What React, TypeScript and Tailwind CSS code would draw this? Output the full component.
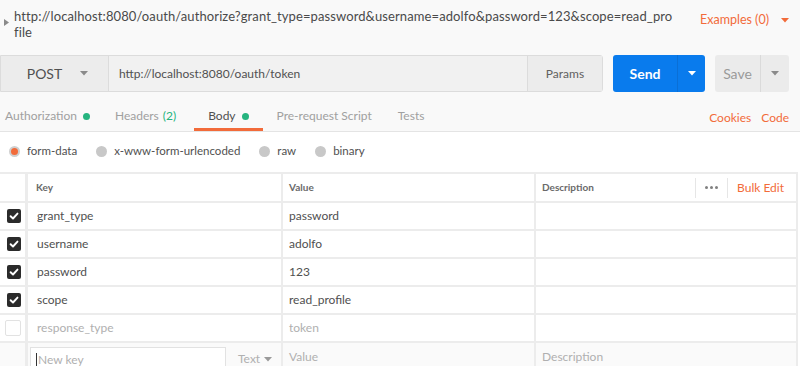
import React from "react";

const ORANGE = "text-[#f26b3a]";

function Check() {
  return (
    <div className="w-[14px] h-[14px] rounded-[2px] bg-[#2b2b2b] flex items-center justify-center">
      <svg width="10" height="10" viewBox="0 0 10 10">
        <path d="M1.6 5.2 L4 7.5 L8.5 2.6" stroke="white" strokeWidth="1.9" fill="none" strokeLinecap="round" strokeLinejoin="round" />
      </svg>
    </div>
  );
}

function Caret({ color = "#777", size = 8 }: { color?: string; size?: number }) {
  return (
    <svg width={size} height={size / 2 + 1} viewBox="0 0 8 5">
      <path d="M0 0 L8 0 L4 4.5 Z" fill={color} />
    </svg>
  );
}

function Radio({ on, label }: { on?: boolean; label: string }) {
  return (
    <div className="flex items-center gap-[7px]">
      {on ? (
        <div className="w-[11px] h-[11px] rounded-full bg-[#f26b3a] border-[2px] border-[#cfcfcf]" />
      ) : (
        <div className="w-[11px] h-[11px] rounded-full bg-[#c8c8c8]" />
      )}
      <span className="text-[11.5px] text-[#505050]">{label}</span>
    </div>
  );
}

const rows = [
  { k: "grant_type", v: "password", on: true },
  { k: "username", v: "adolfo", on: true },
  { k: "password", v: "123", on: true },
  { k: "scope", v: "read_profile", on: true },
  { k: "response_type", v: "token", on: false },
];

export default function App() {
  return (
    <div
      className="w-[800px] h-[366px] overflow-hidden bg-white"
      style={{ fontFamily: "Lato, 'Open Sans', sans-serif" }}
    >
      <div className="bg-[#f9f9f9] border-b border-[#e4e4e4]">
        {/* URL title */}
        <div className="flex items-start h-[55px] pt-[8px]">
          <div className="w-[14px] pt-[11px] pl-[4px]">
            <svg width="5" height="7" viewBox="0 0 5 7">
              <path d="M0 0 L5 3.5 L0 7 Z" fill="#8a8a8a" />
            </svg>
          </div>
          <div className="w-[680px] text-[13px] leading-[16px] tracking-[0.1px] text-[#4a4a4a]">
            <div>http://localhost:8080/oauth/authorize?grant_type=password&amp;username=adolfo&amp;password=123&amp;scope=read_pro</div>
            <div>file</div>
          </div>
          <div className="flex items-center gap-[12px] ml-[6px] pt-[3px]">
            <span className={`text-[12.5px] ${ORANGE}`}>Examples (0)</span>
            <Caret color="#f26b3a" />
          </div>
        </div>

        {/* Request bar */}
        <div className="flex h-[37px]">
          <div className="flex w-[603px] border border-[#dcdcdc] rounded-r-[3px] bg-[#efefef]">
            <div className="w-[108px] flex items-center justify-center gap-[18px] bg-[#ececec] border-r border-[#dcdcdc]">
              <span className="text-[14px] text-[#505050] ml-[6px]">POST</span>
              <Caret color="#8a8a8a" />
            </div>
            <div className="flex-1 flex items-center pl-[10px] text-[12px] text-[#505050] bg-[#f1f1f1]">
              http://localhost:8080/oauth/token
            </div>
            <div className="w-[75px] flex items-center justify-center text-[12px] text-[#606060] bg-[#ececec] border-l border-[#dcdcdc]">
              Params
            </div>
          </div>
          <div className="ml-[10px] w-[92px] flex rounded-[3px] bg-[#097bed] text-white">
            <div className="w-[64px] flex items-center justify-center text-[14px] font-bold">Send</div>
            <div className="flex-1 flex items-center justify-center border-l border-[#0a6fd6]">
              <Caret color="#ffffff" />
            </div>
          </div>
          <div className="ml-[10px] w-[74px] flex rounded-[3px] bg-[#ebebeb]">
            <div className="w-[45px] flex items-center justify-center text-[14px] text-[#9a9a9a]">Save</div>
            <div className="flex-1 flex items-center justify-center border-l border-[#dadada]">
              <Caret color="#8a8a8a" />
            </div>
          </div>
        </div>

        {/* Tabs */}
        <div className="flex items-end h-[39px]">
          <div className="flex text-[12px] ml-[-9px]">
            <div className="px-[14px] h-[30px] flex items-center gap-[6px] text-[#a0a0a0]">
              Authorization <span className="w-[7px] h-[7px] rounded-full bg-[#26b47f]" />
            </div>
            <div className="pl-[11px] pr-[18px] h-[30px] flex items-center gap-[4px] text-[#a0a0a0]">
              Headers <span className="text-[#26b47f]">(2)</span>
            </div>
            <div className="px-[14px] h-[30px] flex items-center gap-[6px] text-[#505050] border-b-[3px] border-[#f26b3a] pt-[3px]">
              Body <span className="w-[7px] h-[7px] rounded-full bg-[#26b47f]" />
            </div>
            <div className="px-[14px] h-[30px] flex items-center text-[#a0a0a0]">Pre-request Script</div>
            <div className="px-[12px] h-[30px] flex items-center text-[#a0a0a0]">Tests</div>
          </div>
          <div className="ml-auto flex gap-[10px] h-[30px] items-center pr-[11px] pt-[4px] text-[12px]">
            <span className={ORANGE}>Cookies</span>
            <span className={ORANGE}>Code</span>
          </div>
        </div>
      </div>

      {/* Body type radios */}
      <div className="flex items-center h-[38px] pl-[9px] gap-[19px]">
        <Radio on label="form-data" />
        <Radio label="x-www-form-urlencoded" />
        <Radio label="raw" />
        <Radio label="binary" />
      </div>

      {/* Table */}
      <div className="w-[798px] border-t-2 border-[#ececec] text-[12px] mt-[2px]">
        <div className="grid grid-cols-[28px_255px_253px_1fr] h-[29px] border-b-2 border-[#ececec]">
          <div className="border-r-[3px] border-[#ececec]" />
          <div className="flex items-center pl-[8px] text-[10px] font-bold text-[#6a6a6a] border-r-2 border-[#ececec]">Key</div>
          <div className="flex items-center pl-[6px] text-[10px] font-bold text-[#6a6a6a] border-r-2 border-[#ececec]">Value</div>
          <div className="flex items-center pl-[6px] border-r-2 border-[#ececec]">
            <span className="text-[10px] font-bold text-[#6a6a6a]">Description</span>
            <div className="ml-auto flex items-center h-[20px]">
              <div className="border-l border-[#e6e6e6] h-[20px] px-[9px] flex items-center gap-[2px]">
                <span className="w-[3px] h-[3px] rounded-full bg-[#808080]" />
                <span className="w-[3px] h-[3px] rounded-full bg-[#808080]" />
                <span className="w-[3px] h-[3px] rounded-full bg-[#808080]" />
              </div>
              <div className="border-l border-[#e6e6e6] h-[20px] pl-[9px] pr-[12px] flex items-center text-[12px] text-[#f26b3a]">
                Bulk Edit
              </div>
            </div>
          </div>
        </div>
        {rows.map((r) => (
          <div key={r.k} className="grid grid-cols-[28px_255px_253px_1fr] h-[28px] border-b-2 border-[#ececec]">
            <div className="flex items-center justify-end pr-[4px] border-r-[3px] border-[#ececec]">
              {r.on ? <Check /> : <div className="w-[16px] h-[16px] rounded-[2px] border border-[#e2e2e2] bg-white" />}
            </div>
            <div className={`flex items-center pl-[9px] border-r-2 border-[#ececec] ${r.on ? "text-[#505050]" : "text-[#b0b0b0]"}`}>{r.k}</div>
            <div className={`flex items-center pl-[6px] border-r-2 border-[#ececec] ${r.on ? "text-[#505050]" : "text-[#b0b0b0]"}`}>{r.v}</div>
            <div className="border-r-2 border-[#ececec]" />
          </div>
        ))}
        <div className="grid grid-cols-[28px_255px_253px_1fr] h-[28px] bg-[#fafafa]">
          <div className="border-r-[3px] border-[#ececec]" />
          <div className="flex items-end border-r-2 border-[#ececec]">
            <div className="w-[196px] h-[24px] ml-[2px] bg-white border border-[#e2e2e2] border-b-0 flex items-center pl-[5px] text-[#b0b0b0]">
              <span className="w-px h-[14px] bg-[#333] mr-[1px]" />New key
            </div>
            <div className="flex items-center gap-[4px] h-[24px] ml-[12px] text-[#b0b0b0]">
              Text <Caret color="#9a9a9a" />
            </div>
          </div>
          <div className="flex items-center pl-[6px] text-[#b0b0b0] border-r-2 border-[#ececec]">Value</div>
          <div className="flex items-center pl-[6px] text-[#b0b0b0] border-r-2 border-[#ececec]">Description</div>
        </div>
      </div>
    </div>
  );
}
